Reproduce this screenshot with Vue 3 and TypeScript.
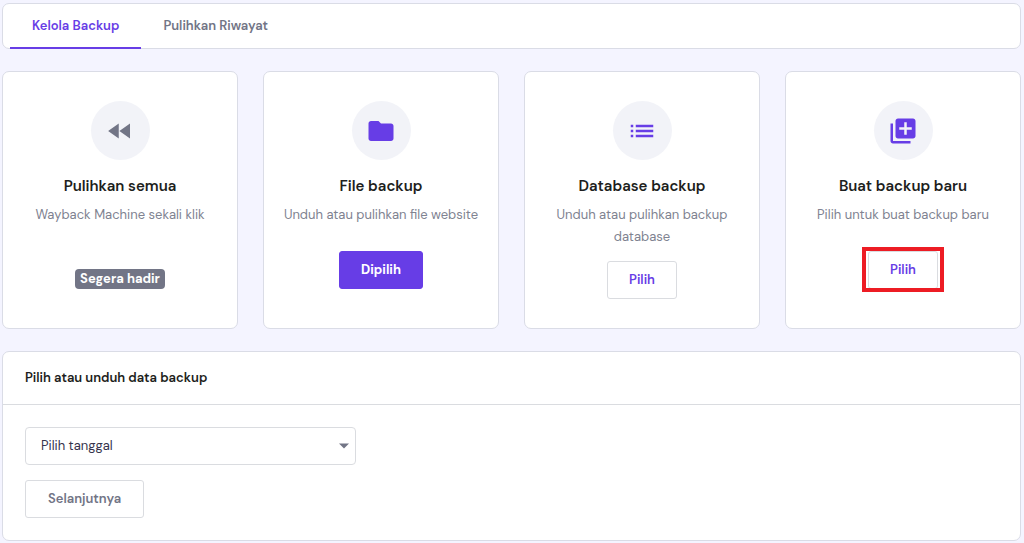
<script setup lang="ts">
import { ref } from 'vue'

interface BackupOption {
  title: string
  text: string
  icon: string
  action: string
  kind: 'badge' | 'primary' | 'outline'
  marked?: boolean
}

const tabs = ['Kelola Backup', 'Pulihkan Riwayat']
const activeTab = ref(0)
const date = ref('')

const options: BackupOption[] = [
  {
    title: 'Pulihkan semua',
    text: 'Wayback Machine sekali klik',
    icon: 'M11 18V6l-8.5 6 8.5 6zm.5-6l8.5 6V6l-8.5 6z',
    action: 'Segera hadir',
    kind: 'badge',
  },
  {
    title: 'File backup',
    text: 'Unduh atau pulihkan file website',
    icon: 'M10 4H4c-1.1 0-1.99.9-1.99 2L2 18c0 1.1.9 2 2 2h16c1.1 0 2-.9 2-2V8c0-1.1-.9-2-2-2h-8l-2-2z',
    action: 'Dipilih',
    kind: 'primary',
  },
  {
    title: 'Database backup',
    text: 'Unduh atau pulihkan backup database',
    icon: 'M3 13h2v-2H3v2zm0 4h2v-2H3v2zm0-8h2V7H3v2zm4 4h14v-2H7v2zm0 4h14v-2H7v2zM7 7v2h14V7H7z',
    action: 'Pilih',
    kind: 'outline',
  },
  {
    title: 'Buat backup baru',
    text: 'Pilih untuk buat backup baru',
    icon: 'M4 6H2v14c0 1.1.9 2 2 2h14v-2H4V6zm16-4H8c-1.1 0-2 .9-2 2v12c0 1.1.9 2 2 2h12c1.1 0 2-.9 2-2V4c0-1.1-.9-2-2-2zm-1 9h-4v4h-2v-4H9V9h4V5h2v4h4v2z',
    action: 'Pilih',
    kind: 'outline',
    marked: true,
  },
]
</script>

<template>
  <main class="page">
    <nav class="tabs">
      <button
        v-for="(tab, i) in tabs"
        :key="tab"
        type="button"
        class="tab"
        :class="{ active: activeTab === i }"
        @click="activeTab = i"
      >{{ tab }}</button>
    </nav>

    <section class="cards">
      <article v-for="option in options" :key="option.title" class="card">
        <div class="disc" :class="{ muted: option.kind === 'badge' }">
          <svg viewBox="0 0 24 24" aria-hidden="true"><path :d="option.icon" /></svg>
        </div>
        <h2>{{ option.title }}</h2>
        <p>{{ option.text }}</p>
        <span v-if="option.kind === 'badge'" class="badge">{{ option.action }}</span>
        <button v-else type="button" class="btn" :class="[option.kind, { marked: option.marked }]">
          {{ option.action }}
        </button>
      </article>
    </section>

    <section class="panel">
      <h3 id="data-title">Pilih atau unduh data backup</h3>
      <form class="form" @submit.prevent>
        <div class="select">
          <select v-model="date" aria-labelledby="data-title">
            <option value="">Pilih tanggal</option>
          </select>
          <svg viewBox="0 0 10 6" aria-hidden="true"><path d="M0 0.5h10L5 5.5z" /></svg>
        </div>
        <button type="submit" class="btn next">Selanjutnya</button>
      </form>
    </section>
  </main>
</template>

<style>
body {
  margin: 0;
  background: #f4f4ff;
}
</style>

<style scoped>
.page {
  box-sizing: border-box;
  min-height: 100vh;
  padding: 3px 3px 2px 2px;
  background: #f4f4ff;
  font-family: 'DM Sans', Inter, 'Open Sans', sans-serif;
  font-size: 13px;
  line-height: 22px;
  color: #1d1e20;
}

.tabs,
.card,
.panel {
  box-sizing: border-box;
  background: #fff;
  border: 1px solid #dadce6;
  border-radius: 7px;
}

.tabs {
  display: flex;
  height: 46px;
  padding: 0 7px;
}

.tab {
  margin: 0 0 -1px;
  padding: 0 22px;
  border: 0;
  border-bottom: 2px solid transparent;
  background: none;
  font: inherit;
  font-weight: 600;
  color: #727586;
  cursor: pointer;
}

.tab.active {
  border-color: #673de6;
  color: #673de6;
}

.cards {
  display: grid;
  grid-template-columns: repeat(4, 1fr);
  gap: 25px;
  margin: 22px 0;
}

.card {
  display: flex;
  flex-direction: column;
  align-items: center;
  padding: 29px 18px;
  text-align: center;
}

.disc {
  display: grid;
  place-items: center;
  width: 59px;
  height: 59px;
  border-radius: 50%;
  background: #f2f3f8;
  color: #673de6;
}

.disc.muted {
  color: #727586;
}

.disc svg {
  width: 30px;
  height: 30px;
  fill: currentColor;
}

h2 {
  margin: 15px 0 7px;
  font-size: 15px;
  line-height: 22px;
  font-weight: 600;
}

.card p {
  min-height: 34px;
  margin: 0 0 13px;
  color: #808391;
}

.badge {
  margin-top: 18px;
  padding: 0 5px;
  border-radius: 4px;
  background: #727586;
  color: #fff;
  line-height: 20px;
  font-weight: 700;
}

.btn {
  box-sizing: border-box;
  height: 38px;
  padding: 0 21px;
  border: 1px solid #dadce0;
  border-radius: 3px;
  background: #fff;
  color: #673de6;
  font: inherit;
  font-weight: 600;
  cursor: pointer;
}

.btn.primary {
  border-color: #673de6;
  background: #673de6;
  color: #fff;
  font-weight: 700;
}

.btn.marked {
  position: relative;
}

.btn.marked::after {
  content: '';
  position: absolute;
  inset: -5px -7px -4px;
  border: 4px solid #ed1c24;
}

.panel h3 {
  margin: 0;
  padding: 15px 22px;
  border-bottom: 1px solid #dadce0;
  font-size: 13px;
  line-height: 22px;
  font-weight: 600;
}

.form {
  display: flex;
  flex-direction: column;
  align-items: flex-start;
  gap: 15px;
  padding: 22px;
}

.select {
  position: relative;
  width: 100%;
  max-width: 331px;
}

select {
  box-sizing: border-box;
  width: 100%;
  height: 38px;
  padding: 0 30px 0 15px;
  border: 1px solid #dadce0;
  border-radius: 4px;
  appearance: none;
  background: #fff;
  color: #36344d;
  font: inherit;
}

.select svg {
  position: absolute;
  top: 16px;
  right: 7px;
  width: 10px;
  height: 6px;
  fill: #727586;
  pointer-events: none;
}

.btn.next {
  padding: 0 22px;
  color: #727586;
}
</style>
